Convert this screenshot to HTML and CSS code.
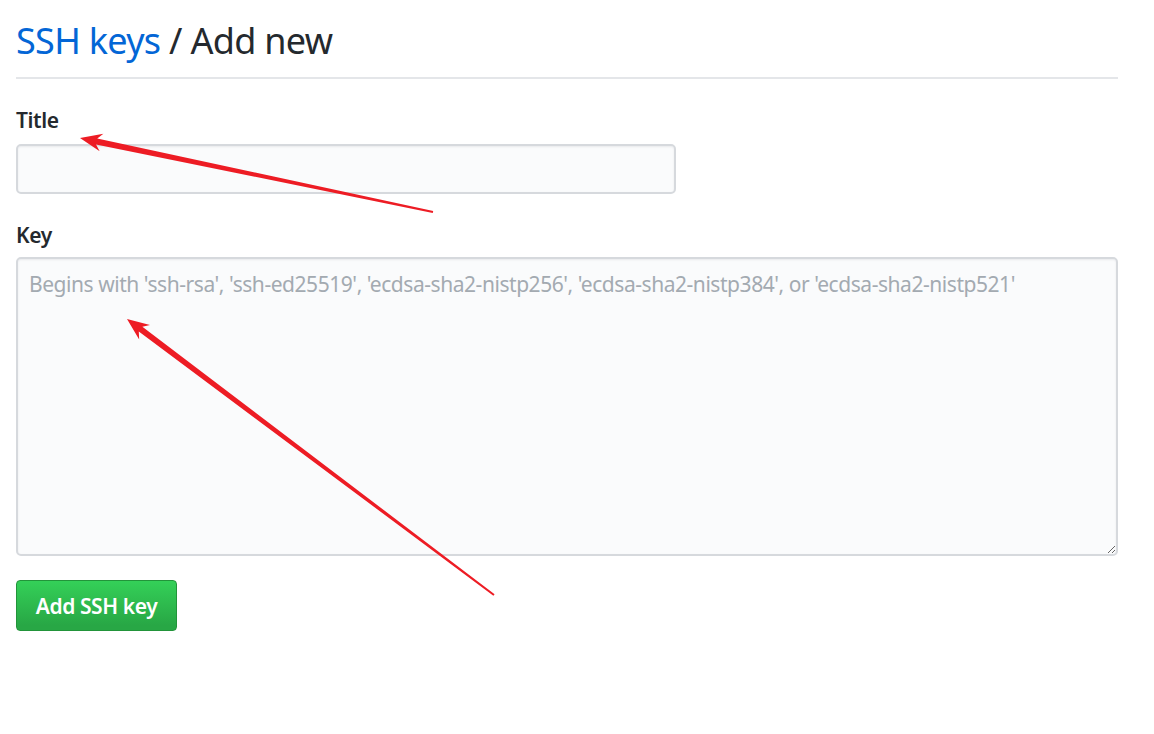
FILE: index.html
```html
<!DOCTYPE html>
<html>
<head>
<meta charset="utf-8">
<link rel="stylesheet" href="styles.css">
</head>
<body>
<div class="page">
  <div class="subhead">
    <h2 class="subhead-heading"><a class="crumb" href="#">SSH keys</a> / Add new</h2>
  </div>
  <form class="form">
    <div class="group group-title">
      <label class="label">Title</label>
      <input class="input title-input" type="text">
    </div>
    <div class="group group-key">
      <label class="label">Key</label>
      <textarea class="input key-input" placeholder="Begins with 'ssh-rsa', 'ssh-ed25519', 'ecdsa-sha2-nistp256', 'ecdsa-sha2-nistp384', or 'ecdsa-sha2-nistp521'"></textarea>
    </div>
    <div class="actions">
      <button class="btn-primary" type="button">Add SSH key</button>
    </div>
  </form>
  <svg class="annotations" width="1154" height="734" viewBox="0 0 1154 734">
    <polygon fill="#ed1c24" points="80,138 103.38,133.70 97.26,138.55 433.21,211.02 432.79,212.98 96.02,144.43 99.68,151.32"/>
    <polygon fill="#ed1c24" points="127,319 149.99,325.03 142.39,326.82 494.60,594.20 493.40,595.80 138.79,331.62 139.17,339.41"/>
  </svg>
</div>
</body>
</html>
```

FILE: styles.css
```css
* { box-sizing: border-box; }
html, body { margin: 0; padding: 0; background: #fff; }
body {
  font-family: "Segoe UI", "Noto Sans", "Open Sans", sans-serif;
  color: #24292e;
}
.page {
  position: relative;
  width: 1154px;
  height: 734px;
  padding: 0 36px 0 16px;
}
.subhead {
  padding-top: 17px;
  border-bottom: 2px solid #e4e6e9;
  width: 1102px;
}
.subhead-heading {
  margin: 0;
  font-size: 36px;
  font-weight: 400;
  line-height: 48px;
  letter-spacing: -0.7px;
  padding-bottom: 12px;
}
.crumb { color: #0366d6; text-decoration: none; }
.form { width: 1102px; }
.group { display: flex; flex-direction: column; }
.group-title { margin-top: 26px; }
.group-key { margin-top: 26px; }
.label {
  font-size: 21px;
  font-weight: 600;
  line-height: 30px;
  letter-spacing: -0.4px;
}
.group-title .label { margin-bottom: 9px; }
.group-key .label { margin-bottom: 7px; }
.input {
  background: #fafbfc;
  border: 2px solid #d6d9dd;
  border-radius: 5px;
  box-shadow: inset 0 1px 2px rgba(27,31,35,0.075);
  font-family: inherit;
  font-size: 21px;
  letter-spacing: -0.45px;
  color: #24292e;
  outline: none;
}
.title-input { width: 660px; height: 50px; padding: 0 11px; }
.key-input {
  width: 1102px;
  height: 299px;
  padding: 10px 11px;
  resize: vertical;
  line-height: 30px;
}
.key-input::placeholder { color: #a3aab1; }
.actions { margin-top: 24px; }
.btn-primary {
  width: 161px;
  height: 51px;
  border: 1px solid #22943a;
  border-radius: 4px;
  background: linear-gradient(#34d058, #28a745 90%);
  color: #fff;
  font-family: inherit;
  font-size: 21px;
  font-weight: 600;
  letter-spacing: -0.4px;
  padding: 0;
}
.annotations { position: absolute; left: 0; top: 0; pointer-events: none; }
```
